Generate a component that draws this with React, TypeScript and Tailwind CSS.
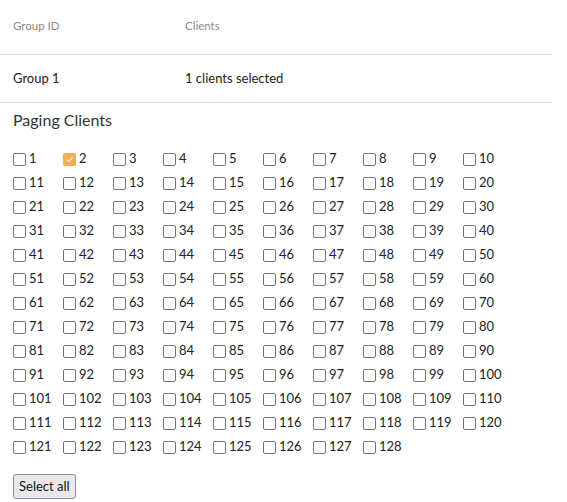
import { useState } from 'react'

const FONT = "font-['Lato','Noto_Sans',sans-serif]"

function Box({ checked }: { checked: boolean }) {
  return checked ? (
    <span className="flex h-[13px] w-[13px] items-center justify-center rounded-[2px] bg-[#f2ad55]">
      <svg width="9" height="9" viewBox="0 0 9 9" fill="none">
        <path d="M1.5 4.6 3.6 6.6 7.6 2.4" stroke="#fde9cf" strokeWidth="1.4" />
      </svg>
    </span>
  ) : (
    <span className="h-[13px] w-[13px] rounded-[2px] border border-[#767676] bg-white" />
  )
}

export default function App() {
  const [selected, setSelected] = useState<number[]>([2])
  const clients = Array.from({ length: 128 }, (_, i) => i + 1)

  const toggle = (n: number) =>
    setSelected((s) => (s.includes(n) ? s.filter((x) => x !== n) : [...s, n]))

  return (
    <div className={`w-[552px] bg-white text-[#222] ${FONT}`}>
      <div className="flex h-[55px] items-center border-b border-[#dedede] pb-[3px] text-[11.5px] text-[#8a8a8a]">
        <div className="w-[185px] pl-[13px]">Group ID</div>
        <div>Clients</div>
      </div>
      <div className="flex h-[48px] items-center border-b border-[#dedede] text-[13px]">
        <div className="w-[185px] pl-[13px]">Group 1</div>
        <div>{selected.length} clients selected</div>
      </div>

      <div className="px-[13px]">
        <h3 className="mt-[6px] text-[16px] leading-[22px] text-[#333]">Paging Clients</h3>
        <div className="mt-[18px] grid grid-cols-[repeat(10,50px)] gap-y-[4px] text-[13px]">
          {clients.map((n) => (
            <label key={n} className="flex h-[20px] cursor-pointer items-center" onClick={() => toggle(n)}>
              <Box checked={selected.includes(n)} />
              <span className="ml-[3px]">{n}</span>
            </label>
          ))}
        </div>
        <button
          onClick={() => setSelected(clients)}
          className="mt-[17px] h-[25px] rounded-[3px] border border-[#8f8f9d] bg-[#e9e9ed] px-[5px] text-[13px] text-[#111]"
        >
          Select all
        </button>
      </div>
    </div>
  )
}
